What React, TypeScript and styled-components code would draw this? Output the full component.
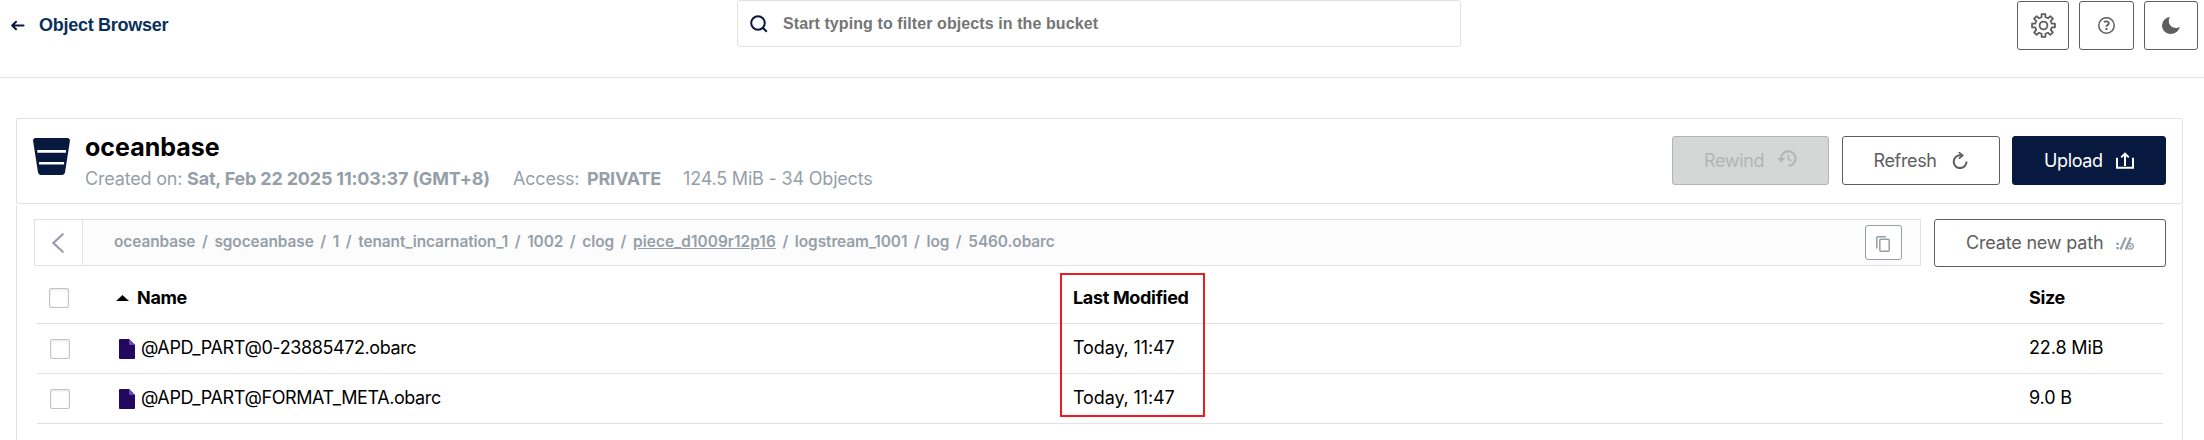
import React from 'react';
import styled, { createGlobalStyle } from 'styled-components';

const Global = createGlobalStyle`
  *, *::before, *::after { box-sizing: border-box; }
  html, body { margin: 0; padding: 0; background: #fff; overflow: hidden; }
  body { font-family: Inter, "Liberation Sans", sans-serif; color: #000; }
  svg { display: block; flex: none; }
`;

const Page = styled.div`
  width: 2204px;
  height: 440px;
  display: flex;
  flex-direction: column;
  overflow: hidden;
`;

const Header = styled.header`
  height: 78px;
  flex: none;
  border-bottom: 1px solid #e2e2e2;
  display: grid;
  grid-template-columns: 737px 724px 1fr;
  align-items: start;
`;

const BackLink = styled.div`
  display: flex;
  align-items: center;
  gap: 14px;
  height: 50px;
  padding-left: 11px;
  color: #07193e;
`;

const PageTitle = styled.span`
  font: 700 18px/20px "Liberation Sans", Arial, sans-serif;
  letter-spacing: -0.27px;
  color: #0b2f5a;
`;

const Search = styled.div`
  display: flex;
  align-items: center;
  gap: 15px;
  height: 47px;
  padding-left: 12px;
  border: 1px solid #e2e2e2;
  border-radius: 3px;
  color: #07193e;
`;

const Placeholder = styled.span`
  font: 700 16px/20px "Liberation Sans", Arial, sans-serif;
  letter-spacing: 0.09px;
  color: #757575;
`;

const Tools = styled.div`
  display: flex;
  gap: 10px;
  padding: 1px 6px 0 0;
  justify-content: flex-end;
`;

const ToolButton = styled.button<{ $w: number }>`
  width: ${p => p.$w}px;
  height: 49px;
  padding: 0;
  display: flex;
  align-items: center;
  justify-content: center;
  background: #fff;
  border: 1px solid #5e5e5e;
  border-radius: 3px;
  color: #5e5e5e;
`;

const Content = styled.main`
  display: flex;
  flex-direction: column;
  margin: 40px 21px 0 16px;
`;

const Summary = styled.section`
  display: flex;
  align-items: flex-start;
  height: 86px;
  flex: none;
  padding: 12px 16px 0;
  border: 1px solid #e2e2e2;
  border-radius: 2px;
`;

const BucketMark = styled.div`
  padding-top: 7px;
`;

const BucketText = styled.div`
  display: flex;
  flex-direction: column;
  padding: 1px 0 0 15px;
  flex: 1;
`;

const BucketName = styled.h1`
  margin: 0;
  font: 700 25px/30px Inter, sans-serif;
`;

const Meta = styled.div`
  display: flex;
  margin-top: 4px;
  height: 26px;
  font-size: 18px;
  line-height: 26px;
  letter-spacing: -0.19px;
  color: #969fa8;
  white-space: pre;
`;

const MetaItem = styled.span<{ $w?: number }>`
  width: ${p => (p.$w ? `${p.$w}px` : 'auto')};
`;

const Actions = styled.div`
  display: grid;
  grid-template-columns: 157px 158px 154px;
  column-gap: 12.5px;
  padding-top: 5px;
`;

const Button = styled.button<{ $h?: number; $w?: number; $kind?: 'primary' | 'disabled' }>`
  width: ${p => (p.$w ? `${p.$w}px` : 'auto')};
  height: ${p => p.$h ?? 49}px;
  flex: none;
  padding: 0 31px;
  display: flex;
  align-items: center;
  justify-content: space-between;
  font: 400 18px/24px Inter, sans-serif;
  letter-spacing: ${p => (p.$w ? '-0.18px' : '-0.36px')};
  white-space: nowrap;
  border-radius: 3px;
  border: 1px solid ${p => (p.$kind === 'primary' ? '#07193e' : p.$kind === 'disabled' ? '#b4b4b4' : '#5e5e5e')};
  background: ${p => (p.$kind === 'primary' ? '#07193e' : p.$kind === 'disabled' ? '#d5d7d7' : '#fff')};
  color: ${p => (p.$kind === 'primary' ? '#fff' : p.$kind === 'disabled' ? '#b4b4b4' : '#5e5e5e')};
`;

const Listing = styled.section`
  height: 260px;
  border: 1px solid #e2e2e2;
  border-top: 0;
  border-radius: 2px;
  padding: 15px 16px 0 17px;
`;

const PathRow = styled.div`
  display: flex;
  gap: 13px;
  height: 48px;
`;

const PathBar = styled.div`
  display: flex;
  align-items: center;
  flex: 1;
  height: 47px;
  border: 1px solid #e2e2e2;
  background: #fcfcfc;
  padding-right: 18px;
`;

const PathBack = styled.div`
  width: 48px;
  height: 45px;
  display: flex;
  align-items: center;
  justify-content: center;
  padding-right: 2px;
  background: #fff;
  border-right: 1px solid #e2e2e2;
  color: #969fa8;
`;

const Crumbs = styled.nav`
  flex: 1;
  padding: 0 0 2px 31px;
  display: flex;
  gap: 6.6px;
  font-size: 15.4px;
  line-height: 20px;
  font-weight: 600;
  color: #969fa8;
`;

const Crumb = styled.span<{ $active?: boolean }>`
  letter-spacing: ${p => (p.$active ? '0.05px' : '-0.07px')};
  text-decoration: ${p => (p.$active ? 'underline' : 'none')};
`;

const CopyButton = styled.button`
  width: 37px;
  height: 35px;
  padding: 2px 1px 0 0;
  display: flex;
  align-items: center;
  justify-content: center;
  background: #fff;
  border: 1px solid #969fa8;
  border-radius: 3px;
  color: #969fa8;
`;

const Table = styled.div`
  position: relative;
  margin: 0 3px 0 3px;
`;

const Row = styled.div<{ $head?: boolean }>`
  display: grid;
  grid-template-columns: 79px 957px 956px 1fr;
  align-items: center;
  height: ${p => (p.$head ? 57 : 50)}px;
  padding-top: ${p => (p.$head ? 6 : 1)}px;
  border-bottom: 1px solid #e2e2e2;
  font-size: 18px;
  line-height: 24px;
  white-space: nowrap;
`;

const HeadLabel = styled.span`
  font-weight: 700;
  letter-spacing: -0.33px;
`;

const Cell = styled.span<{ $tight?: boolean }>`
  padding-bottom: 3px;
  letter-spacing: ${p => (p.$tight ? '-0.4px' : '-0.12px')};
`;

const Check = styled.span<{ $head?: boolean }>`
  width: 20px;
  height: 20px;
  margin-left: ${p => (p.$head ? 12 : 13)}px;
  border: 1px solid #c3c3c3;
  border-radius: 2px;
  background: #fff;
  box-shadow: inset 0 1px 3px rgba(0, 0, 0, 0.1);
`;

const NameCell = styled.span<{ $gap: number; $pad: number }>`
  display: flex;
  align-items: center;
  gap: ${p => p.$gap}px;
  padding-left: ${p => p.$pad}px;
`;

const Highlight = styled.div`
  position: absolute;
  left: 1023px;
  top: 6px;
  width: 145px;
  height: 144px;
  border: 2px solid #ed1c24;
`;

const ArrowLeft = () => (
  <svg width="14" height="11" viewBox="0 0 14 11" fill="none" stroke="currentColor" strokeWidth="2" strokeLinecap="round" strokeLinejoin="round">
    <path d="M12.5 5.5H2M5 1.8 1.2 5.5 5 9.2" />
  </svg>
);

const SearchIcon = () => (
  <svg width="18" height="18" viewBox="0 0 18 18" fill="none" stroke="currentColor" strokeWidth="2">
    <circle cx="8" cy="8" r="6.8" />
    <path d="m12.8 12.8 4 4" />
  </svg>
);

const gearPath = (() => {
  const pts: string[] = [];
  const teeth = 8;
  for (let i = 0; i < teeth; i++) {
    const base = (i * 2 * Math.PI) / teeth - Math.PI / 2;
    const corners: [number, number][] = [[-0.23, 8.5], [-0.16, 11.6], [0.16, 11.6], [0.23, 8.5]];
    corners.forEach(([a, r]) => {
      pts.push(`${(12.5 + r * Math.cos(base + a)).toFixed(2)} ${(12.5 + r * Math.sin(base + a)).toFixed(2)}`);
    });
  }
  return `M${pts.join('L')}Z`;
})();

const GearIcon = () => (
  <svg width="25" height="25" viewBox="0 0 25 25" fill="none" stroke="currentColor" strokeWidth="1.8" strokeLinejoin="round">
    <path d={gearPath} />
    <circle cx="12.5" cy="12.5" r="3.9" />
  </svg>
);

const HelpIcon = () => (
  <svg width="17" height="17" viewBox="0 0 17 17" fill="none" stroke="currentColor" strokeWidth="1.5">
    <circle cx="8.5" cy="8.5" r="7.7" />
    <path d="M5.9 5c1.5-1.1 4.900-.9 4.900 1.300 0 1.700-2.400 1.600-2.400 3.400" strokeWidth="1.9" />
    <path d="M7.4 11h2v2h-2z" fill="currentColor" stroke="none" />
  </svg>
);

const MoonIcon = () => (
  <svg width="18" height="17" viewBox="0 0 18 17" fill="currentColor">
    <path d="M7.8 0A8.700 8.700 0 0 0 0 8.300C0 13.200 3.900 17 8.700 17c4.300 0 8.200-3 9.100-7.200-1.200.8-2.600 1.200-4 1.200-4 0-7-3.100-7-6.900 0-1.500.3-2.900 1-4.100Z" />
  </svg>
);

const BucketIcon = () => (
  <svg width="37" height="37" viewBox="0 0 37 37">
    <path d="M2.500 0h32a2.500 2.500 0 0 1 2.400 3L32 34.500a3 3 0 0 1-3 2.500H8a3 3 0 0 1-3-2.500L.1 3A2.500 2.500 0 0 1 2.500 0Z" fill="#07193e" />
    <path d="M4.300 13.400h28.700M6.100 25.300h25" stroke="#fff" strokeWidth="2.6" />
  </svg>
);

const LiftedSvg = styled.svg`
  margin-bottom: 4px;
`;

const RewindIcon = () => (
  <LiftedSvg width="20" height="17" viewBox="0 0 20 17" fill="none" stroke="currentColor" strokeWidth="2">
    <path d="M4 9V8.200A7.300 7.300 0 1 1 11.300 15.800" />
    <path d="M0 8h8.200L4.100 12.200Z" fill="currentColor" stroke="none" />
    <path d="M11.200 4.500v4.200l3 2.500" strokeWidth="1.5" />
  </LiftedSvg>
);

const RefreshIcon = () => (
  <svg width="16" height="17" viewBox="0 0 16 17" fill="none" stroke="currentColor" strokeWidth="2">
    <path d="M9.500 3.300H7.700A6.400 6.400 0 1 0 14.500 9.500" />
    <path d="M6.700.2 10.700 3.400 6.900 6.600" strokeWidth="1.7" />
  </svg>
);

const UploadIcon = () => (
  <svg width="18" height="17" viewBox="0 0 18 17" fill="none" stroke="currentColor" strokeWidth="2">
    <path d="M1 5.800V15.800h16V5.800" />
    <path d="M9 14V2M5.200 5.400 9 1.600l3.800 3.800" />
  </svg>
);

const PathIcon = () => (
  <svg width="18" height="13" viewBox="0 0 18 13" fill="none" stroke="#969fa8" strokeWidth="1.7">
    <path d="M.3 5.700h2.500v2.300H.3zM.3 10h2.500v2.300H.3z" fill="#969fa8" stroke="none" />
    <path d="M4.500 12.500 9.800.5M9.600 12.500 14.900.5" strokeWidth="2.2" />
    <circle cx="14.3" cy="9.2" r="2.9" strokeWidth="1.3" />
    <path d="M13 9.200h2.600M14.300 7.900v2.600" strokeWidth="0.9" />
  </svg>
);

const BackChevron = () => (
  <svg width="12" height="20" viewBox="0 0 12 20" fill="none" stroke="currentColor" strokeWidth="2.2" strokeLinecap="round">
    <path d="M10.700 1.200 1.400 10l9.300 8.800" />
  </svg>
);

const CopyIcon = () => (
  <svg width="14" height="16" viewBox="0 0 14 16" fill="none" stroke="currentColor" strokeWidth="1.5">
    <rect x="3.800" y="3.300" width="9.400" height="11.900" rx="1" />
    <path d="M.8 12.500V1.600c0-.5.300-.8.800-.8h8.400" />
  </svg>
);

const SortIcon = () => (
  <svg width="13" height="6" viewBox="0 0 13 6">
    <path d="M0 6 6.500 0 13 6Z" />
  </svg>
);

const FileIcon = () => (
  <svg width="16" height="20" viewBox="0 0 16 20">
    <path d="M1 0h9L16 6v13a1 1 0 0 1-1 1H1a1 1 0 0 1-1-1V1a1 1 0 0 1 1-1Z" fill="#22085f" />
    <path d="M10 0 16 6h-5a1 1 0 0 1-1-1Z" fill="#6a4bb5" />
  </svg>
);

const crumbs = ['oceanbase', 'sgoceanbase', '1', 'tenant_incarnation_1', '1002', 'clog', 'piece_d1009r12p16', 'logstream_1001', 'log', '5460.obarc'];

const files = [
  { name: '@APD_PART@0-23885472.obarc', modified: 'Today, 11:47', size: '22.8 MiB' },
  { name: '@APD_PART@FORMAT_META.obarc', modified: 'Today, 11:47', size: '9.0 B' },
];

export default function App() {
  return (
    <Page>
      <Global />
      <Header>
        <BackLink><ArrowLeft /><PageTitle>Object Browser</PageTitle></BackLink>
        <Search><SearchIcon /><Placeholder>Start typing to filter objects in the bucket</Placeholder></Search>
        <Tools>
          <ToolButton $w={52} aria-label="Settings"><GearIcon /></ToolButton>
          <ToolButton $w={55} aria-label="Help"><HelpIcon /></ToolButton>
          <ToolButton $w={54} aria-label="Dark mode"><MoonIcon /></ToolButton>
        </Tools>
      </Header>
      <Content>
        <Summary>
          <BucketMark><BucketIcon /></BucketMark>
          <BucketText>
            <BucketName>oceanbase</BucketName>
            <Meta>
              <MetaItem $w={428}>Created on: <b>Sat, Feb 22 2025 11:03:37 (GMT+8)</b></MetaItem>
              <MetaItem $w={74}>Access:</MetaItem>
              <MetaItem $w={96}><b>PRIVATE</b></MetaItem>
              <MetaItem>124.5 MiB - 34 Objects</MetaItem>
            </Meta>
          </BucketText>
          <Actions>
            <Button $kind="disabled">Rewind <RewindIcon /></Button>
            <Button>Refresh <RefreshIcon /></Button>
            <Button $kind="primary">Upload <UploadIcon /></Button>
          </Actions>
        </Summary>
        <Listing>
          <PathRow>
            <PathBar>
              <PathBack><BackChevron /></PathBack>
              <Crumbs>
                {crumbs.map((c, i) => (
                  <React.Fragment key={c}>
                    {i > 0 && <span>/</span>}
                    <Crumb $active={c.startsWith('piece')}>{c}</Crumb>
                  </React.Fragment>
                ))}
              </Crumbs>
              <CopyButton aria-label="Copy path"><CopyIcon /></CopyButton>
            </PathBar>
            <Button $w={232} $h={48}>Create new path <PathIcon /></Button>
          </PathRow>
          <Table>
            <Row $head>
              <Check $head />
              <NameCell $gap={8} $pad={0}><SortIcon /><HeadLabel>Name</HeadLabel></NameCell>
              <HeadLabel>Last Modified</HeadLabel>
              <HeadLabel>Size</HeadLabel>
            </Row>
            {files.map(f => (
              <Row key={f.name}>
                <Check />
                <NameCell $gap={6} $pad={3}><FileIcon /><Cell $tight>{f.name}</Cell></NameCell>
                <Cell>{f.modified}</Cell>
                <Cell>{f.size}</Cell>
              </Row>
            ))}
            <Highlight />
          </Table>
        </Listing>
      </Content>
    </Page>
  );
}
